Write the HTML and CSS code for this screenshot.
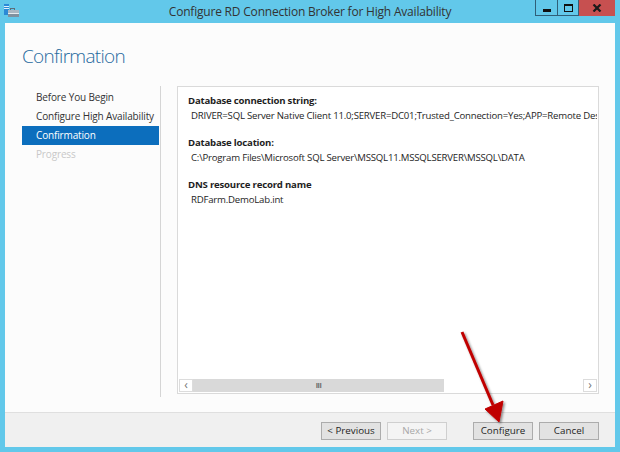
FILE: index.html
```html
<!DOCTYPE html>
<html lang="en">
    <head>
        <meta charset="UTF-8" />
        <title>Configure RD Connection Broker for High Availability</title>
        <link rel="stylesheet" href="styles.css">
    </head>

    <body>
        <div class="window">
            <div class="titlebar">
                <div class="app-icon">
                    <svg width="16" height="14" viewBox="0 0 16 14">
                        <rect x="0" y="0" width="5" height="11" fill="#2b8ad6" />
                        <rect x="0" y="2" width="5" height="1" fill="#dff0fc" />
                        <rect x="0" y="4" width="5" height="1" fill="#dff0fc" />
                        <rect x="6.5" y="4.5" width="4" height="2" fill="none" stroke="#5d6d7a" />
                        <rect x="4" y="6" width="11" height="7" fill="#7f919f" />
                        <rect x="4" y="6" width="11" height="3" fill="#a9b7c2" />
                        <rect x="4" y="9" width="11" height="1" fill="#e6ecf0" />
                    </svg>
                </div>
                <div class="title">Configure RD Connection Broker for High Availability</div>
                <div class="controls">
                    <div class="ctl ctl-min"><span class="min-bar"></span></div>
                    <div class="ctl ctl-max"><span class="max-box"></span></div>
                    <div class="ctl ctl-close">
                        <svg width="10" height="8" viewBox="0 0 10 8">
                            <path d="M1.5 0.5 L8.5 7.5 M8.5 0.5 L1.5 7.5" stroke="#1a1a1a" stroke-width="2.2" />
                        </svg>
                    </div>
                </div>
            </div>

            <div class="client">
                <div class="main">
                    <h1 class="page-title">Confirmation</h1>
                    <div class="body-row">
                        <ul class="steps">
                            <li>Before You Begin</li>
                            <li>Configure High Availability</li>
                            <li class="current">Confirmation</li>
                            <li class="disabled">Progress</li>
                        </ul>
                        <div class="details">
                            <div class="details-scroll">
                                <div class="field">
                                    <div class="label">Database connection string:</div>
                                    <div class="value">DRIVER=SQL Server Native Client 11.0;SERVER=DC01;Trusted_Connection=Yes;APP=Remote Desktop Services Connection Broker;DATABASE=RDFarm</div>
                                </div>
                                <div class="field">
                                    <div class="label">Database location:</div>
                                    <div class="value">C:\Program Files\Microsoft SQL Server\MSSQL11.MSSQLSERVER\MSSQL\DATA</div>
                                </div>
                                <div class="field">
                                    <div class="label">DNS resource record name</div>
                                    <div class="value">RDFarm.DemoLab.int</div>
                                </div>
                            </div>
                            <div class="hscroll">
                                <div class="sb-btn">&#8249;</div>
                                <div class="sb-track">
                                    <div class="sb-thumb">III</div>
                                </div>
                                <div class="sb-btn">&#8250;</div>
                            </div>
                        </div>
                    </div>
                </div>

                <div class="footer">
                    <button class="btn">&lt; Previous</button>
                    <button class="btn" disabled>Next &gt;</button>
                    <button class="btn btn-gap">Configure</button>
                    <button class="btn">Cancel</button>
                </div>
            </div>

            <svg class="callout-arrow" width="620" height="452" viewBox="0 0 620 452">
                <defs>
                    <filter id="shadow" x="-20%" y="-20%" width="140%" height="140%">
                        <feDropShadow dx="1.5" dy="1.5" stdDeviation="1.2" flood-color="#000" flood-opacity="0.45" />
                    </filter>
                </defs>
                <g filter="url(#shadow)" fill="#c00000" stroke="#c00000">
                    <line x1="462" y1="332" x2="493" y2="405" stroke-width="3" />
                    <polygon points="499,422 485,409 503,401" stroke-width="1" />
                </g>
            </svg>
        </div>
    </body>
</html>
```

FILE: styles.css
```css
* {
    box-sizing: border-box;
}

body {
    margin: 0;
    font-family: 'Open Sans', 'Noto Sans', sans-serif;
    color: #1e1e1e;
}

.window {
    position: relative;
    width: 620px;
    height: 452px;
    background: #62c8ea;
    display: flex;
    flex-direction: column;
    overflow: hidden;
}

/* title bar */
.titlebar {
    height: 23px;
    display: grid;
    grid-template-columns: 1fr auto 1fr;
    align-items: start;
}

.app-icon {
    padding: 4px 0 0 4px;
    line-height: 0;
}

.title {
    font-size: 12px;
    letter-spacing: -0.2px;
    color: #333;
    line-height: 16px;
    padding-top: 4px;
}

.controls {
    justify-self: end;
    display: flex;
    margin-right: 5px;
}

.ctl {
    height: 16px;
    border: 1px solid #2f5f78;
    border-top: none;
    display: flex;
    align-items: center;
    justify-content: center;
}

.ctl-min {
    width: 23px;
}

.ctl-max {
    width: 21px;
    border-left: none;
}

.ctl-close {
    width: 36px;
    border: none;
    background: #c75050;
}

.min-bar {
    width: 8px;
    height: 3px;
    background: #111;
    margin-top: 5px;
}

.max-box {
    width: 9px;
    height: 8px;
    border: 1px solid #111;
    border-top-width: 2px;
}

/* client area */
.client {
    flex: 1;
    margin: 0 5px 5px;
    background: #fcfcfc;
    display: flex;
    flex-direction: column;
}

.main {
    flex: 1;
    padding: 20px 16px 0 17px;
}

.page-title {
    margin: 0;
    font-size: 19px;
    font-weight: 300;
    letter-spacing: -0.7px;
    line-height: 26px;
    color: #1f6a9e;
}

.body-row {
    display: flex;
    margin-top: 17px;
}

.steps {
    list-style: none;
    margin: 0;
    padding: 2px 0 0;
    width: 139px;
    height: 311px;
    border-right: 1px solid #d5d5d5;
    font-size: 10px;
    letter-spacing: -0.15px;
    color: #333;
}

.steps li {
    height: 19px;
    line-height: 19px;
    padding-left: 14px;
    margin-right: 1px;
    white-space: nowrap;
}

.steps li.current {
    background: #0c6ebd;
    color: #fff;
}

.steps li.disabled {
    color: #c8c8c8;
}

.details {
    margin-left: 16px;
    width: 422px;
    height: 308px;
    border: 1px solid #dadada;
    background: #fff;
    display: flex;
    flex-direction: column;
    padding: 0 1px 1px;
}

.details-scroll {
    flex: 1;
    overflow: hidden;
    padding: 6px 0 0 9px;
    font-size: 9.6px;
    letter-spacing: -0.2px;
}

.field {
    margin-bottom: 12px;
}

.label {
    font-weight: 700;
    line-height: 15px;
}

.value {
    padding-left: 3px;
    line-height: 15px;
    white-space: nowrap;
}

/* horizontal scrollbar */
.hscroll {
    height: 13px;
    display: flex;
    background: #fff;
}

.sb-btn {
    width: 14px;
    border: 1px solid #dcdcdc;
    font-size: 12px;
    line-height: 10px;
    text-align: center;
    color: #777;
}

.sb-track {
    flex: 1;
    display: flex;
}

.sb-thumb {
    width: 251px;
    background: #d9d9d9;
    font-size: 7px;
    font-weight: 700;
    letter-spacing: -0.5px;
    color: #666;
    text-align: center;
    line-height: 13px;
}

/* footer */
.footer {
    height: 35px;
    border-top: 1px solid #dfdfdf;
    background: #f0f0f0;
    display: flex;
    justify-content: flex-end;
    align-items: flex-start;
    padding: 9px 16px 0 0;
    gap: 6px;
}

.btn {
    width: 60px;
    height: 18px;
    padding: 0;
    border: 1px solid #acacac;
    background: #e2e2e2;
    font-family: inherit;
    font-size: 9.8px;
    color: #1e1e1e;
    line-height: 16px;
}

.btn:disabled {
    background: #f4f4f4;
    border-color: #cfcfcf;
    color: #a8a8a8;
}

.btn-gap {
    margin-left: 20px;
}

.callout-arrow {
    position: absolute;
    left: 0;
    top: 0;
    pointer-events: none;
}
```
